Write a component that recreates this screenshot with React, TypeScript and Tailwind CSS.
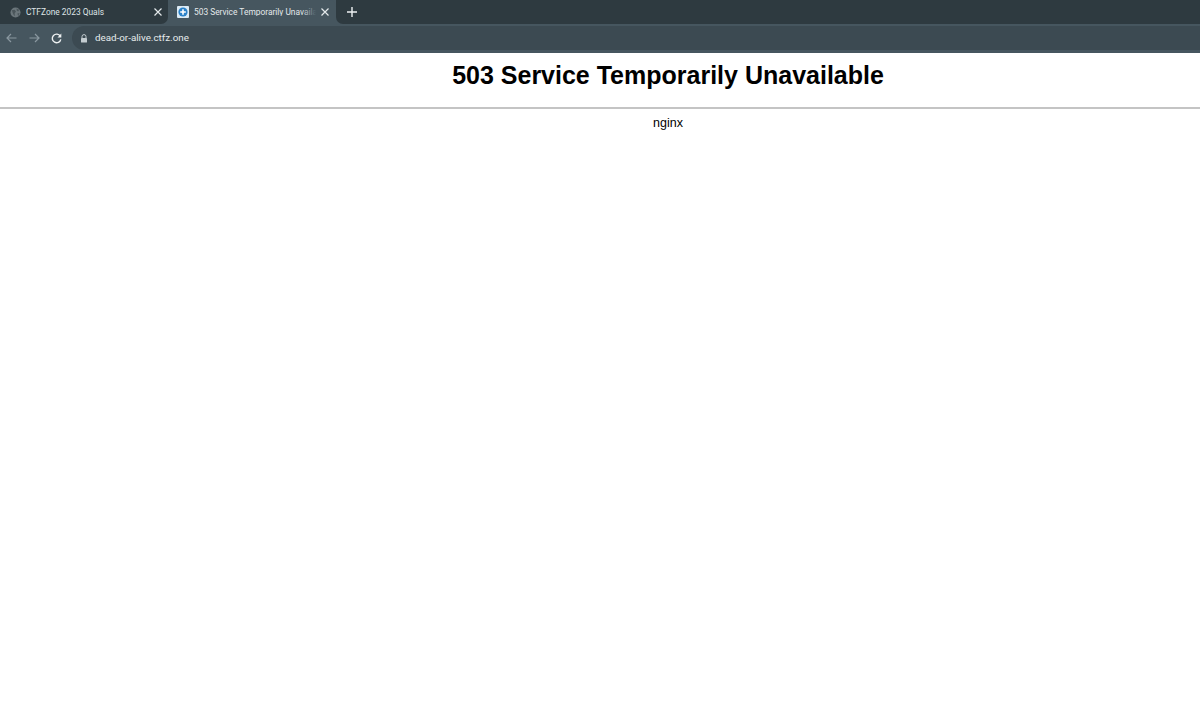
import React from "react";

function Close({ className }: { className?: string }) {
  return (
    <svg width="8" height="8" viewBox="0 0 8 8" className={className}>
      <path d="M0.5 0.5 L7.5 7.5 M7.5 0.5 L0.5 7.5" stroke="#e4e9eb" strokeWidth="1.2" fill="none" />
    </svg>
  );
}

export default function App() {
  return (
    <div className="h-[707px] w-[1200px] overflow-hidden bg-white font-['Liberation_Sans',Arial,sans-serif]">
      <header className="font-['Roboto','Noto_Sans',sans-serif]">
        {/* tab strip */}
        <div className="flex h-[24px] items-stretch bg-[#46565f]">
          <div className="flex w-[168px] items-center rounded-br-[7px] bg-[#2e3a40] pl-[10px] pr-[6px]">
            <svg width="11" height="11" viewBox="0 0 12 12" className="shrink-0">
              <circle cx="6" cy="6" r="5.5" fill="#6b767b" />
              <path d="M2 3.5 L5 3 L6.5 5 L5 7 L5.5 10 L3.5 8 Z M7 1.5 L10 3 L9 5 L7.5 4 Z M8 7 L10.5 6.5 L9 10 Z" fill="#4a555a" />
            </svg>
            <span className="ml-[5px] flex-1 whitespace-nowrap text-[8.4px] leading-none text-[#dfe4e6]">CTFZone 2023 Quals</span>
            <Close />
          </div>
          <div className="flex w-[168px] items-center rounded-t-[7px] bg-[#46565f] pl-[9px] pr-[7px]">
            <svg width="12" height="12" viewBox="0 0 12 12" className="shrink-0">
              <rect width="12" height="12" rx="1" fill="#dcebf5" />
              <circle cx="6" cy="6" r="4.6" fill="#2b82c9" />
              <path d="M6 3.2 V8.8 M3.2 6 H8.8" stroke="#ffffff" strokeWidth="1.6" />
            </svg>
            <div className="relative ml-[5px] w-[122px] overflow-hidden whitespace-nowrap text-[8.4px] leading-none text-[#e4e9eb]">
              503 Service Temporarily Unavailable
              <div className="absolute inset-y-0 right-0 w-[14px] bg-gradient-to-r from-transparent to-[#46565f]" />
            </div>
            <Close className="ml-auto" />
          </div>
          <div className="flex flex-1 items-center rounded-bl-[7px] bg-[#2e3a40] pl-[11px]">
            <svg width="10" height="10" viewBox="0 0 10 10">
              <path d="M5 0 V10 M0 5 H10" stroke="#eef1f2" strokeWidth="1.4" />
            </svg>
          </div>
        </div>
        {/* toolbar */}
        <div className="flex h-[29px] items-start bg-[#46565f] pl-[6px] pt-[2px]">
          <div className="flex h-[24px] items-center">
            <svg width="11" height="10" viewBox="0 0 11 10">
              <path d="M10.5 5 H1 M5 1 L1 5 L5 9" stroke="#8a98a0" strokeWidth="1.2" fill="none" />
            </svg>
            <svg width="11" height="10" viewBox="0 0 11 10" className="ml-[12px]">
              <path d="M0.5 5 H10 M6 1 L10 5 L6 9" stroke="#8a98a0" strokeWidth="1.2" fill="none" />
            </svg>
            <svg width="11" height="11" viewBox="0 0 11 11" className="ml-[11px]">
              <path d="M9.3 3.2 A4.3 4.3 0 1 0 9.8 6.3" stroke="#eef1f2" strokeWidth="1.4" fill="none" />
              <path d="M10.3 0.6 V4.4 H6.5 Z" fill="#eef1f2" />
            </svg>
          </div>
          <div className="ml-[10px] flex h-[24px] flex-1 items-center rounded-l-[12px] bg-[#3c4a52] pl-[8px]">
            <svg width="8" height="9" viewBox="0 0 8 9">
              <path d="M2 4 V2.6 A2 2 0 0 1 6 2.6 V4" stroke="#c4ccd0" strokeWidth="1" fill="none" />
              <rect x="1" y="4" width="6" height="4.6" rx="0.6" fill="#c4ccd0" />
            </svg>
            <span className="ml-[7px] text-[9.8px] leading-none text-[#e6eaec]">dead-or-alive.ctfz.one</span>
          </div>
        </div>
      </header>
      <main className="pl-[136px] text-center text-black">
        <h1 className="pt-[7px] text-[25px] font-bold leading-[30px]">503 Service Temporarily Unavailable</h1>
      </main>
      <hr className="mt-[17px] h-[2px] border-0 bg-[#c4c4c4]" />
      <p className="pl-[136px] pt-[6px] text-center text-[12.5px] leading-[16px] text-black">nginx</p>
    </div>
  );
}
